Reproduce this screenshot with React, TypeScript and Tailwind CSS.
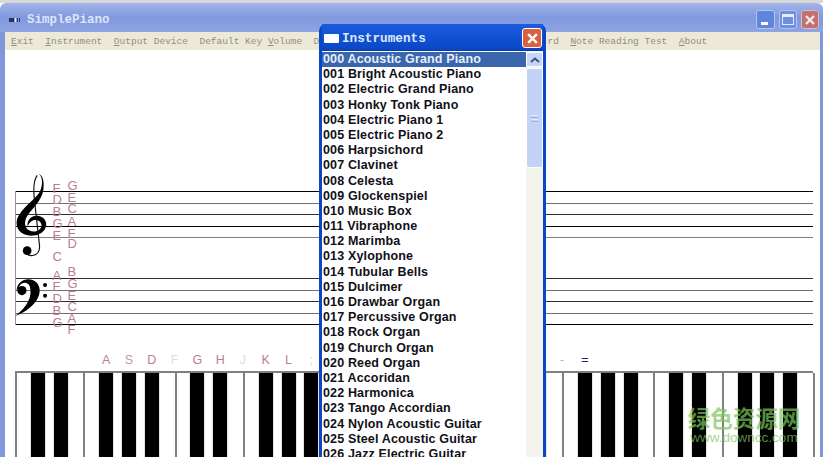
const MONO = "font-['Liberation_Mono',monospace]";

const menuItems = [
  { label: "Exit", key: 0, cls: "" },
  { label: "Instrument", key: 0, cls: "" },
  { label: "Output Device", key: 0, cls: "" },
  { label: "Default Key Volume", key: 12, cls: "" },
  { label: "D", key: -1, cls: "" },
  { label: "rd", key: -1, cls: "ml-[216.7px]" },
  { label: "Note Reading Test", key: 0, cls: "" },
  { label: "About", key: 0, cls: "" },
];

const instruments = [
  "000 Acoustic Grand Piano",
  "001 Bright Acoustic Piano",
  "002 Electric Grand Piano",
  "003 Honky Tonk Piano",
  "004 Electric Piano 1",
  "005 Electric Piano 2",
  "006 Harpsichord",
  "007 Clavinet",
  "008 Celesta",
  "009 Glockenspiel",
  "010 Music Box",
  "011 Vibraphone",
  "012 Marimba",
  "013 Xylophone",
  "014 Tubular Bells",
  "015 Dulcimer",
  "016 Drawbar Organ",
  "017 Percussive Organ",
  "018 Rock Organ",
  "019 Church Organ",
  "020 Reed Organ",
  "021 Accoridan",
  "022 Harmonica",
  "023 Tango Accordian",
  "024 Nylon Acoustic Guitar",
  "025 Steel Acoustic Guitar",
  "026 Jazz Electric Guitar",
];

// letter, x, y in page coordinates
const notes: [string, number, number][] = [
  ["F", 57, 188], ["D", 57, 199], ["B", 57, 211], ["G", 57, 223], ["E", 57, 235],
  ["C", 57, 256], ["A", 57, 275], ["F", 57, 286], ["D", 57, 298], ["B", 57, 310], ["G", 57, 322],
  ["G", 72, 185], ["E", 72, 197], ["C", 72, 208], ["A", 72, 221], ["F", 72, 233], ["D", 72, 243],
  ["B", 72, 271], ["G", 72, 283], ["E", 72, 295], ["C", 72, 306], ["A", 72, 318], ["F", 72, 329],
];

const keyLabels: Record<number, [string, string]> = {
  4: ["A", "text-[#b97f8c]"],
  5: ["S", "text-[#c09aa4]"],
  6: ["D", "text-[#b97f8c]"],
  7: ["F", "text-[#e4dde0]"],
  8: ["G", "text-[#b97f8c]"],
  9: ["H", "text-[#b97f8c]"],
  10: ["J", "text-[#e4dde0]"],
  11: ["K", "text-[#b97f8c]"],
  12: ["L", "text-[#b97f8c]"],
  13: [";", "text-[#e4c8cc]"],
  24: ["-", "text-[#b5b5b5]"],
  25: ["=", "text-[#1c1c70]"],
};

const WHITE_COUNT = 35;
const blackOffsets = [1, 2, 4, 5, 6];
const blackKeys: number[] = [];
for (let o = 0; o < 5; o++) blackOffsets.forEach((b) => blackKeys.push(o * 7 + b));

function StaffLines({ colors }: { colors: string[] }) {
  return (
    <div className="flex flex-col gap-[10.5px]">
      {colors.map((c, i) => (
        <div key={i} className={`h-px w-full ${c}`} />
      ))}
    </div>
  );
}

function TrebleClef() {
  return (
    <svg viewBox="40 20 110 260" className="absolute left-[13px] top-[122px] h-[87px] w-[37px]">
      <path d="M112 26 C128 24 132 60 118 82 C104 104 66 126 52 160 C44 190 66 214 102 210 C138 206 150 172 128 156 C108 142 78 156 84 184 C88 166 104 160 116 166 C132 176 126 194 106 198 C84 200 70 184 78 160 C86 138 118 116 128 84 C136 56 130 22 112 26 Z" fill="#000" />
      <path d="M112 30 C100 46 100 72 104 106 L119 240 C121 272 90 276 78 262" fill="none" stroke="#111" strokeWidth="3.5" />
      <circle cx="82" cy="255" r="13" fill="#000" />
    </svg>
  );
}

function BassClef() {
  return (
    <svg viewBox="40 325 110 130" className="absolute left-[13px] top-[225px] h-[43px] w-[37px]">
      <path d="M50 372 C50 342 88 326 110 348 C134 372 114 424 46 449 C84 420 98 390 90 360 C85 345 65 345 58 360 Z" fill="#000" />
      <circle cx="66" cy="372" r="14" fill="#000" />
      <circle cx="136" cy="355" r="6" fill="#000" />
      <circle cx="136" cy="388" r="6" fill="#000" />
    </svg>
  );
}

function WindowButtons() {
  return (
    <div className="flex gap-[4px]">
      <div className="flex h-[19px] w-[19px] items-end rounded-[3px] border border-[#b4c4ef] bg-[#5f86dc] pb-[3px] pl-[4px]">
        <div className="h-[3px] w-[7px] bg-white" />
      </div>
      <div className="flex h-[19px] w-[18px] items-center justify-center rounded-[3px] border border-[#b4c4ef] bg-[#6d90e0]">
        <div className="h-[11px] w-[12px] border border-t-[3px] border-[#e4ebfa]" />
      </div>
      <div className="flex h-[19px] w-[18px] items-center justify-center rounded-[3px] border border-[#d4bcc8] bg-[#c46f70]">
        <svg viewBox="0 0 12 12" className="h-[12px] w-[12px]">
          <path d="M2 2 L10 10 M10 2 L2 10" stroke="#f4e8e8" strokeWidth="2.4" />
        </svg>
      </div>
    </div>
  );
}

function InstrumentDialog() {
  return (
    <div className="absolute left-[319px] top-[24px] flex h-[440px] w-[227px] flex-col rounded-t-[7px] bg-[#0a46c8] px-[3px] pb-[3px]">
      <div className="flex h-[26px] shrink-0 items-center bg-gradient-to-b from-[#1a5ce0] to-[#0a46c4] pt-[2px] pl-[2px] pr-[1px]">
        <div className="h-[9px] w-[15px] rounded-[1px] bg-white" />
        <span className={`ml-[3px] mt-[2px] text-[12.7px] font-bold leading-none text-[#dfe8fb] ${MONO}`}>Instruments</span>
        <div className="ml-auto flex h-[20px] w-[20px] items-center justify-center rounded-[3px] border border-white bg-[#d9603c]">
          <svg viewBox="0 0 12 12" className="h-[13px] w-[13px]">
            <path d="M2 2 L10 10 M10 2 L2 10" stroke="#fff" strokeWidth="2.2" />
          </svg>
        </div>
      </div>
      <div className="flex min-h-0 flex-1 border-t border-[#0a3aa8] bg-white">
        <div className="min-w-0 flex-1 overflow-hidden pt-px">
          {instruments.map((name, i) => (
            <div
              key={name}
              className={`h-[15.19px] whitespace-nowrap pl-[1px] font-['Liberation_Sans',sans-serif] text-[12.5px] font-bold leading-[15px] tracking-[0.15px] ${
                i === 0 ? "bg-[#3a66ad] text-[#e8eefa]" : "text-[#101018]"
              }`}
            >
              {name}
            </div>
          ))}
        </div>
        <div className="flex w-[17px] shrink-0 flex-col bg-[#f4f3ee] pt-px">
          <div className="flex h-[15px] items-center justify-center rounded-[2px] border border-white bg-[#c6d5f8]">
            <svg viewBox="0 0 10 6" className="h-[6px] w-[10px]">
              <path d="M1 5 L5 1.5 L9 5" fill="none" stroke="#34507c" strokeWidth="1.8" />
            </svg>
          </div>
          <div className="mt-px flex h-[100px] flex-col items-center justify-center gap-px rounded-[2px] border border-white bg-[#c3d2f7]">
            <div className="h-px w-[7px] bg-[#e6edfc]" />
            <div className="h-px w-[7px] bg-[#9db2e4]" />
            <div className="h-px w-[7px] bg-[#e6edfc]" />
            <div className="h-px w-[7px] bg-[#9db2e4]" />
          </div>
        </div>
      </div>
    </div>
  );
}

function StaffOverlay() {
  return (
    <div className="absolute left-0 top-[50px] h-[300px] w-[100px]">
      <TrebleClef />
      <BassClef />
      {notes.map(([l, x, y], i) => (
        <span
          key={i}
          className="absolute font-['Liberation_Sans',sans-serif] text-[13px] leading-none text-[#b97f8c]"
          style={{ left: x - 4.5, top: y - 50 - 6.5 }}
        >
          {l}
        </span>
      ))}
    </div>
  );
}

export default function App() {
  return (
    <div className="relative h-[457px] w-[823px] overflow-hidden bg-white">
      <div className="h-[3px] bg-[#d8d8d8]" />
      <div className="flex h-[29px] items-center rounded-t-[6px] bg-gradient-to-b from-[#a2b4e8] via-[#8099de] to-[#8ea4e2] pt-[4px] pl-[9px] pr-[4px]">
        <div className="flex items-end gap-px">
          <div className="h-[4px] w-[5px] bg-[#2b3350]" />
          <div className="h-[4px] w-[1px] bg-[#e8ecf8]" />
          <div className="h-[4px] w-[1px] bg-[#2b3350]" />
          <div className="h-[4px] w-[1px] bg-[#2b3350]" />
        </div>
        <span className={`ml-[7px] mt-[2px] text-[12.5px] font-bold leading-none text-[#dde5f8] ${MONO}`}>SimplePiano</span>
        <div className="ml-auto">
          <WindowButtons />
        </div>
      </div>
      <div className="flex h-full border-l-[5px] border-r-[3px] border-[#8097dc]">
        <div className="min-w-0 flex-1">
          <div className={`flex h-[18px] items-center gap-[11.5px] bg-[#ece9d8] pt-[2px] pl-[6px] text-[9.5px] leading-none text-[#8f8f80] ${MONO}`}>
            {menuItems.map((m) => (
              <span key={m.label} className={`whitespace-nowrap ${m.cls}`}>
                {m.key < 0 ? (
                  m.label
                ) : (
                  <>
                    {m.label.slice(0, m.key)}
                    <span className="underline">{m.label[m.key]}</span>
                    {m.label.slice(m.key + 1)}
                  </>
                )}
              </span>
            ))}
          </div>

          <div className="pr-[5px] pl-[10px]">
            <div className="mt-[141px] w-[798px] border-l border-[#a98a94]">
              <StaffLines colors={["bg-black", "bg-[#707070]", "bg-[#303030]", "bg-black", "bg-[#808080]"]} />
              <div className="h-[40px]" />
              <StaffLines colors={["bg-[#303030]", "bg-[#707070]", "bg-[#303030]", "bg-[#707070]", "bg-black"]} />
            </div>

            <div className="-ml-[11.4px] mt-[25px] flex">
              {Array.from({ length: 36 }, (_, i) => (
                <div
                  key={i}
                  className={`flex h-[20px] w-[22.8px] shrink-0 items-center justify-center font-['Liberation_Sans',sans-serif] text-[12.5px] leading-none ${keyLabels[i]?.[1] ?? ""}`}
                >
                  {keyLabels[i]?.[0]}
                </div>
              ))}
            </div>

            <div className="relative mt-px flex h-[100px] w-[798px] border-t-2 border-[#808080]">
              {Array.from({ length: WHITE_COUNT }, (_, i) => (
                <div key={i} className="h-full w-[22.8px] shrink-0 border-l-2 border-[#808080] bg-white" />
              ))}
              <div className="h-full w-0 border-l-2 border-[#808080]" />
              {blackKeys.map((b) => (
                <div
                  key={b}
                  className="absolute top-0 h-full w-[14px] bg-black shadow-[0_0_1px_#666]"
                  style={{ left: b * 22.8 - 7 }}
                />
              ))}
            </div>
          </div>
        </div>
      </div>

      <StaffOverlay />
      <InstrumentDialog />

      <div className="absolute left-[686px] top-[404px] flex w-[116px] flex-col items-center opacity-70">
        <span className="whitespace-nowrap font-['Noto_Sans_CJK_SC',sans-serif] text-[22.5px] font-bold leading-[26px] text-[#7cc65c]">绿色资源网</span>
        <span className="whitespace-nowrap font-['Liberation_Sans',sans-serif] text-[13.5px] leading-[16px] text-[#7cc65c]">www.downcc.com</span>
      </div>
    </div>
  );
}
